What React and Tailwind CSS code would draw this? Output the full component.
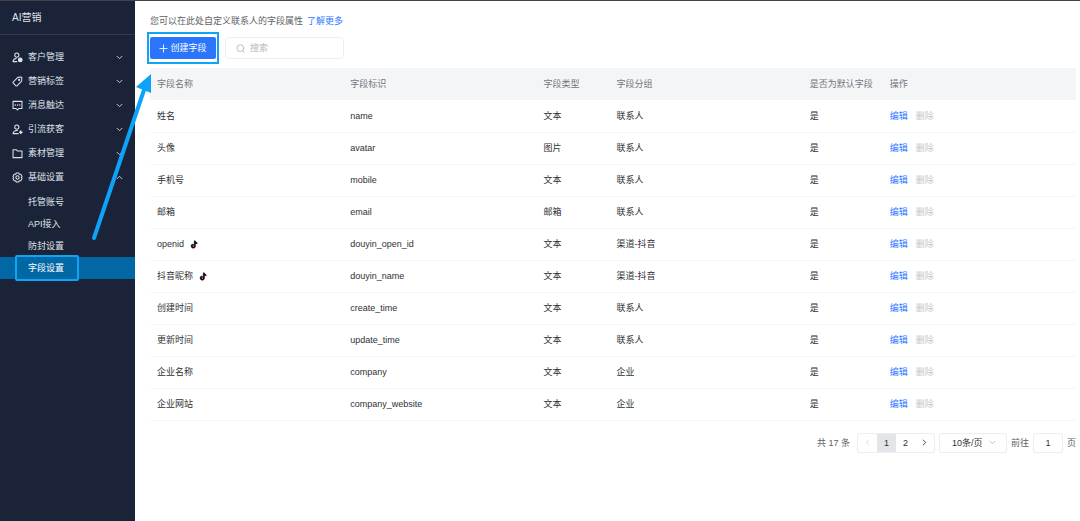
import React from "react";

const ic = { fill: "none", stroke: "currentColor", strokeWidth: 1.5, strokeLinecap: "round", strokeLinejoin: "round" };

function Icon({ children }) {
  return (
    <svg viewBox="0 0 16 16" className="h-[11px] w-[11px] shrink-0" aria-hidden="true" {...ic}>
      {children}
    </svg>
  );
}

const menu = [
  { label: "客户管理", icon: <><circle cx="7" cy="4.5" r="3" /><path d="M6 9.500c-2.500.3-4.300 2-4.500 4.500H7" /><circle cx="12" cy="11.500" r="2.700" fill="currentColor" /></> },
  { label: "营销标签", icon: <><path d="M8.500 2l5-.5.8.8-.3 5-6.500 6.700a1.500 1.500 0 0 1-2.100 0L1.900 10.500a1.500 1.500 0 0 1 0-2.100z" /><circle cx="10.300" cy="5.700" r=".8" /></> },
  { label: "消息触达", icon: <><path d="M1.500 2h13v10.500H10L8 14.500l-2-2H1.500z" /><path d="M4.700 7.200h.1M8 7.200h.1M11.300 7.200h.1" strokeWidth="2" /></> },
  { label: "引流获客", icon: <><circle cx="7" cy="4.500" r="3" /><path d="M8 9.500c-3.500-.3-6 1.500-6.500 4.500H9" /><path d="M11 12h3.600M12.800 10.200v3.600" strokeWidth="2" /></> },
  { label: "素材管理", icon: <path d="M1.500 2.500h5l1.500 2h6.500V14h-13z" /> },
  { label: "基础设置", open: true, icon: <><path d="M6.200 1.500h3.600l.8 1.800 2.200.1 1.800 3.100L13.500 8l1.100 1.500-1.800 3.100-2.200.1-.8 1.800H6.200l-.8-1.800-2.200-.1-1.800-3.100L2.500 8 1.400 6.500l1.800-3.100 2.200-.1z" /><circle cx="8" cy="8" r="2.400" /></> },
];

const subMenu = ["托管账号", "API接入", "防封设置", "字段设置"];

const rows = [
  ["姓名", "name", "文本", "联系人"],
  ["头像", "avatar", "图片", "联系人"],
  ["手机号", "mobile", "文本", "联系人"],
  ["邮箱", "email", "邮箱", "联系人"],
  ["openid", "douyin_open_id", "文本", "渠道-抖音", true],
  ["抖音昵称", "douyin_name", "文本", "渠道-抖音", true],
  ["创建时间", "create_time", "文本", "联系人"],
  ["更新时间", "update_time", "文本", "联系人"],
  ["企业名称", "company", "文本", "企业"],
  ["企业网站", "company_website", "文本", "企业"],
];

function Chevron({ className }) {
  return (
    <svg viewBox="0 0 10 10" className={className} aria-hidden="true" {...ic} strokeWidth="1.2">
      <path d="M1.500 3.200L5 6.700l3.500-3.500" />
    </svg>
  );
}

function Douyin() {
  const note = "M6.200 1h1.700c.1 1.300.9 2.100 2.200 2.300v1.800c-.8 0-1.500-.2-2.200-.7v3.300c0 2-1.300 3.200-3 3.200S2 9.700 2 8.100c0-1.800 1.500-3 3.300-2.800v1.900c-.9-.2-1.500.2-1.500.9 0 .6.500 1 1.100 1 .8 0 1.300-.5 1.300-1.400z";
  return (
    <svg viewBox="1 0 10 12" className="h-[9px] w-2" aria-hidden="true">
      <path d={note} fill="#25f4ee" transform="translate(-.5 -.4)" />
      <path d={note} fill="#fe2c55" transform="translate(.6 .4)" />
      <path d={note} fill="#111" stroke="#111" strokeWidth=".2" />
    </svg>
  );
}

function Sidebar() {
  return (
    <aside className="w-[135px] shrink-0 bg-[#1b2338] text-[#dfe3ea]">
      <h1 className="flex h-[34px] items-center border-b border-[#333b4e] px-3 text-[10px]">AI营销</h1>
      <nav className="pt-2.5">
        <ul>
          {menu.map((m) => (
            <li key={m.label}>
              <button type="button" aria-expanded={!!m.open} className="flex h-6 w-full items-center gap-[5px] px-3">
                <Icon>{m.icon}</Icon>
                <span className="flex-1 text-left">{m.label}</span>
                <Chevron className={m.open ? "h-[7px] w-[7px] rotate-180" : "h-[7px] w-[7px]"} />
              </button>
              {m.open && (
                <ul className="pt-0.5">
                  {subMenu.map((s) => (
                    <li key={s}>
                      <a
                        href="#"
                        className={
                          s === "字段设置"
                            ? "relative flex h-[22px] items-center bg-[#0267a5] pl-7 text-white"
                            : "flex h-[22px] items-center pl-7"
                        }
                      >
                        {s}
                        {s === "字段设置" && (
                          <span className="absolute -inset-y-0.5 left-[15px] w-16 rounded-xs border-2 border-[#10a4f5]" />
                        )}
                      </a>
                    </li>
                  ))}
                </ul>
              )}
            </li>
          ))}
        </ul>
      </nav>
    </aside>
  );
}

function FieldTable() {
  return (
    <table className="mt-[9px] w-full table-fixed text-left text-[#303133]">
      <colgroup>
        <col />
        <col />
        <col className="w-[73px]" />
        <col />
        <col className="w-[80px]" />
        <col />
      </colgroup>
      <thead className="bg-[#f4f5f7] text-[#73767d]">
        <tr className="h-8">
          {["字段名称", "字段标识", "字段类型", "字段分组", "是否为默认字段", "操作"].map((h) => (
            <th key={h} scope="col" className="px-[7px] font-normal whitespace-nowrap">{h}</th>
          ))}
        </tr>
      </thead>
      <tbody>
        {rows.map(([name, key, type, group, douyin]) => (
          <tr key={key} className="h-8 border-b border-[#f5f6f8]">
            <td className="px-[7px]">
              <span className="flex items-center gap-1.5">
                {name}
                {douyin && <Douyin />}
              </span>
            </td>
            <td className="px-[7px]">{key}</td>
            <td className="px-[7px]">{type}</td>
            <td className="px-[7px]">{group}</td>
            <td className="px-[7px]">是</td>
            <td className="px-[7px]">
              <span className="flex gap-2">
                <button type="button" className="text-[#2b78ff]">编辑</button>
                <button type="button" disabled className="text-[#c4c6ca]">删除</button>
              </span>
            </td>
          </tr>
        ))}
      </tbody>
    </table>
  );
}

function Pagination() {
  return (
    <div className="mt-3 flex items-center justify-end text-[#606266]">
      <span className="mr-[7px]">共 17 条</span>
      <div className="mr-1 flex h-5 items-center overflow-hidden rounded-xs border border-[#eceef1] text-[#303133]">
        <button type="button" disabled aria-label="上一页" className="flex h-full w-[19px] items-center justify-center text-[#d5d8dd]">
          <Chevron className="h-[7px] w-[7px] rotate-90" />
        </button>
        <button type="button" aria-current="page" className="h-full w-[19px] bg-[#e3e5e8]">1</button>
        <button type="button" className="h-full w-[19px]">2</button>
        <button type="button" aria-label="下一页" className="flex h-full w-[19px] items-center justify-center">
          <Chevron className="h-[7px] w-[7px] -rotate-90" />
        </button>
      </div>
      <div className="grid h-5 w-[68px] items-center rounded-xs border border-[#eceef1] text-[#303133]">
        <select aria-label="每页条数" className="col-start-1 row-start-1 h-full w-full appearance-none bg-transparent pl-3">
          <option>10条/页</option>
        </select>
        <Chevron className="pointer-events-none col-start-1 row-start-1 mr-2.5 h-[7px] w-[7px] justify-self-end text-[#b4b7bd]" />
      </div>
      <label className="ml-1 flex items-center gap-1">
        前往
        <input defaultValue="1" className="h-5 w-[30px] rounded-xs border border-[#eceef1] text-center text-[#303133]" />
        <span>页</span>
      </label>
    </div>
  );
}

export default function App() {
  return (
    <div className="relative flex min-h-screen border-t border-[#3f4350] bg-white font-['Liberation_Sans','Noto_Sans_CJK_SC',sans-serif] text-[9px] leading-3">
      <Sidebar />
      <main className="min-w-0 flex-1 pt-3.5 pr-1 pl-[15px]">
        <p className="text-[#606266]">
          您可以在此处自定义联系人的字段属性
          <a href="#" className="ml-1 text-[#2b78ff]">了解更多</a>
        </p>
        <div className="mt-2.5 flex items-center gap-[9px]">
          <button type="button" className="relative flex h-[22px] w-[66px] items-center justify-center gap-0.5 rounded-xs bg-[#2a75fb] text-white">
            <svg viewBox="0 0 10 10" className="h-[9px] w-[9px]" aria-hidden="true" {...ic} strokeWidth="1">
              <path d="M5 1v8M1 5h8" />
            </svg>
            创建字段
            <span className="absolute -inset-x-[3px] -inset-y-[5px] border-2 border-[#10a4f5]" />
          </button>
          <label className="flex h-[22px] w-[119px] items-center gap-[5px] rounded-sm border border-[#eceef1] px-2.5 text-[#b4b7bd]">
            <svg viewBox="0 0 10 10" className="h-[9px] w-[9px] shrink-0" aria-hidden="true" {...ic} strokeWidth="1">
              <circle cx="4.800" cy="4.600" r="3.800" />
              <path d="M7.600 7.500L9 9.200" />
            </svg>
            <input aria-label="搜索" placeholder="搜索" className="w-full min-w-0 outline-none placeholder:text-[#b4b7bd]" />
          </label>
        </div>
        <FieldTable />
        <Pagination />
      </main>
      <svg viewBox="0 0 70 180" className="pointer-events-none absolute top-[65px] left-[88px] h-[180px] w-[70px]" aria-hidden="true">
        <path d="M6 172L56 24" stroke="#0da3f8" strokeWidth="4" strokeLinecap="round" />
        <path d="M63 8V27L48 21Z" fill="#0da3f8" />
      </svg>
    </div>
  );
}
